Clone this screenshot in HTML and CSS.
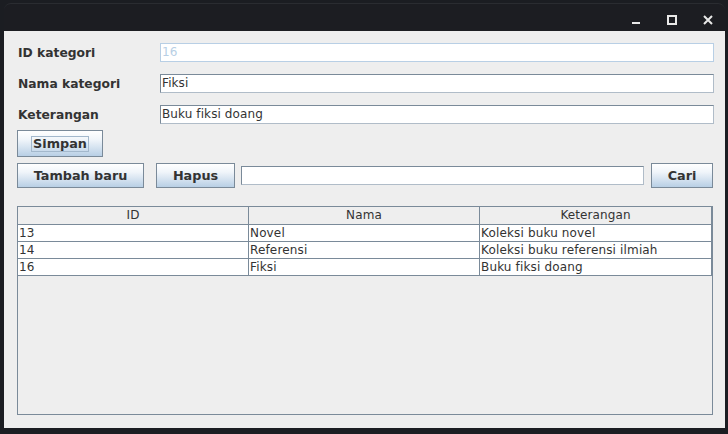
FILE: index.html
```html
<!DOCTYPE html>
<html>
<head>
<meta charset="utf-8">
<link rel="stylesheet" href="styles.css">
</head>
<body>
<div class="window">
  <div class="titlebar">
    <svg class="tb-icon" width="10" height="10" viewBox="0 0 10 10"><rect x="1" y="7" width="8" height="2" fill="#e8e8e8"/></svg>
    <svg class="tb-icon" width="10" height="10" viewBox="0 0 10 10"><rect x="1" y="1" width="8" height="8" fill="none" stroke="#e8e8e8" stroke-width="2"/></svg>
    <svg class="tb-icon" width="10" height="10" viewBox="0 0 10 10"><path d="M1 1 L9 9 M9 1 L1 9" stroke="#e8e8e8" stroke-width="2"/></svg>
  </div>
  <div class="content">
    <div class="form-row">
      <label class="lbl">ID kategori</label>
      <div class="field disabled">16</div>
    </div>
    <div class="form-row">
      <label class="lbl">Nama kategori</label>
      <div class="field">Fiksi</div>
    </div>
    <div class="form-row">
      <label class="lbl">Keterangan</label>
      <div class="field">Buku fiksi doang</div>
    </div>
    <div class="btn-row1">
      <button class="btn w-simpan"><span class="focus">Simpan</span></button>
    </div>
    <div class="btn-row2">
      <button class="btn w-tambah">Tambah baru</button>
      <button class="btn w-hapus">Hapus</button>
      <div class="search"></div>
      <button class="btn w-cari">Cari</button>
    </div>
    <div class="table">
      <div class="thead">
        <div class="th">ID</div>
        <div class="th">Nama</div>
        <div class="th">Keterangan</div>
      </div>
      <div class="tr"><div class="td">13</div><div class="td">Novel</div><div class="td">Koleksi buku novel</div></div>
      <div class="tr"><div class="td">14</div><div class="td">Referensi</div><div class="td">Koleksi buku referensi ilmiah</div></div>
      <div class="tr"><div class="td">16</div><div class="td">Fiksi</div><div class="td">Buku fiksi doang</div></div>
    </div>
  </div>
</div>
</body>
</html>
```

FILE: styles.css
```css
html, body {
  margin: 0;
  padding: 0;
  background: #1b1d22;
  width: 728px;
  height: 434px;
  overflow: hidden;
  font-family: "DejaVu Sans", sans-serif;
}
.window {
  margin: 3px 0 0 4px;
  width: 721px;
  height: 425px;
  display: flex;
  flex-direction: column;
}
.titlebar {
  height: 28px;
  background: #1c1d22;
  border-radius: 7px 7px 0 0;
  border-top: 1px solid #2a2c31;
  box-sizing: border-box;
  display: flex;
  justify-content: flex-end;
  align-items: center;
  gap: 26px;
  padding-right: 12px;
}
.tb-icon { display: block; margin-top: 4px; }
.content {
  flex: 1;
  background: #eeeeee;
  padding: 12px 11px 0 13px;
  box-sizing: border-box;
  display: flex;
  flex-direction: column;
}
.form-row {
  display: flex;
  align-items: center;
  height: 19px;
  margin-bottom: 12px;
}
.lbl {
  width: 142px;
  padding-left: 1px;
  font-weight: bold;
  font-size: 12.3px;
  color: #333333;
}
.field {
  width: 554px;
  height: 19px;
  box-sizing: border-box;
  background: #ffffff;
  border: 1px solid #7a8a99;
  border-right-color: #b0bcc8;
  border-bottom-color: #b0bcc8;
  font-size: 12px;
  letter-spacing: 0.1px;
  line-height: 17px;
  padding-left: 1px;
  color: #333333;
}
.field.disabled {
  border-color: #b8cfe5;
  color: #b8cfe5;
}
.btn {
  box-sizing: border-box;
  border: 1px solid #7a8a99;
  background: linear-gradient(#ffffff 0%, #f0f5fa 35%, #b8cfe5 100%);
  font-family: "DejaVu Sans", sans-serif;
  font-weight: bold;
  font-size: 12.8px;
  color: #333333;
  padding: 0;
  margin: 0;
  display: flex;
  align-items: center;
  justify-content: center;
}
.btn-row1 {
  margin-top: -6px;
  height: 26px;
  display: flex;
}
.w-simpan { width: 86px; height: 27px; }
.focus {
  border: 1px solid #a3b8cc;
  padding: 0 1px;
  line-height: 14px;
}
.btn-row2 {
  margin-top: 7px;
  height: 25px;
  display: flex;
  align-items: center;
}
.w-tambah { width: 127px; height: 25px; }
.w-hapus { width: 79px; height: 25px; margin-left: 12px; }
.search {
  width: 403px;
  height: 19px;
  box-sizing: border-box;
  background: #fff;
  border: 1px solid #7a8a99;
  border-right-color: #b0bcc8;
  border-bottom-color: #b0bcc8;
  margin-left: 6px;
}
.w-cari { width: 62px; height: 25px; margin-left: 7px; }
.table {
  margin-top: 18px;
  width: 696px;
  height: 209px;
  box-sizing: border-box;
  border: 1px solid #7a8a99;
  background: #eeeeee;
}
.thead {
  display: grid;
  grid-template-columns: 231px 231px 1fr;
  height: 17px;
  background: #eeeeee;
  border-bottom: 1px solid #7a8a99;
}
.th {
  font-size: 12px;
  letter-spacing: 0.1px;
  line-height: 17px;
  text-align: center;
  color: #333333;
  border-right: 1px solid #7a8a99;
}
.tr {
  display: grid;
  grid-template-columns: 231px 231px 1fr;
  height: 16px;
  background: #ffffff;
  border-bottom: 1px solid #7a8a99;
}
.td {
  font-size: 12px;
  letter-spacing: 0.15px;
  line-height: 16px;
  padding-left: 1px;
  color: #333333;
  border-right: 1px solid #7a8a99;
  white-space: nowrap;
  overflow: hidden;
}
```
